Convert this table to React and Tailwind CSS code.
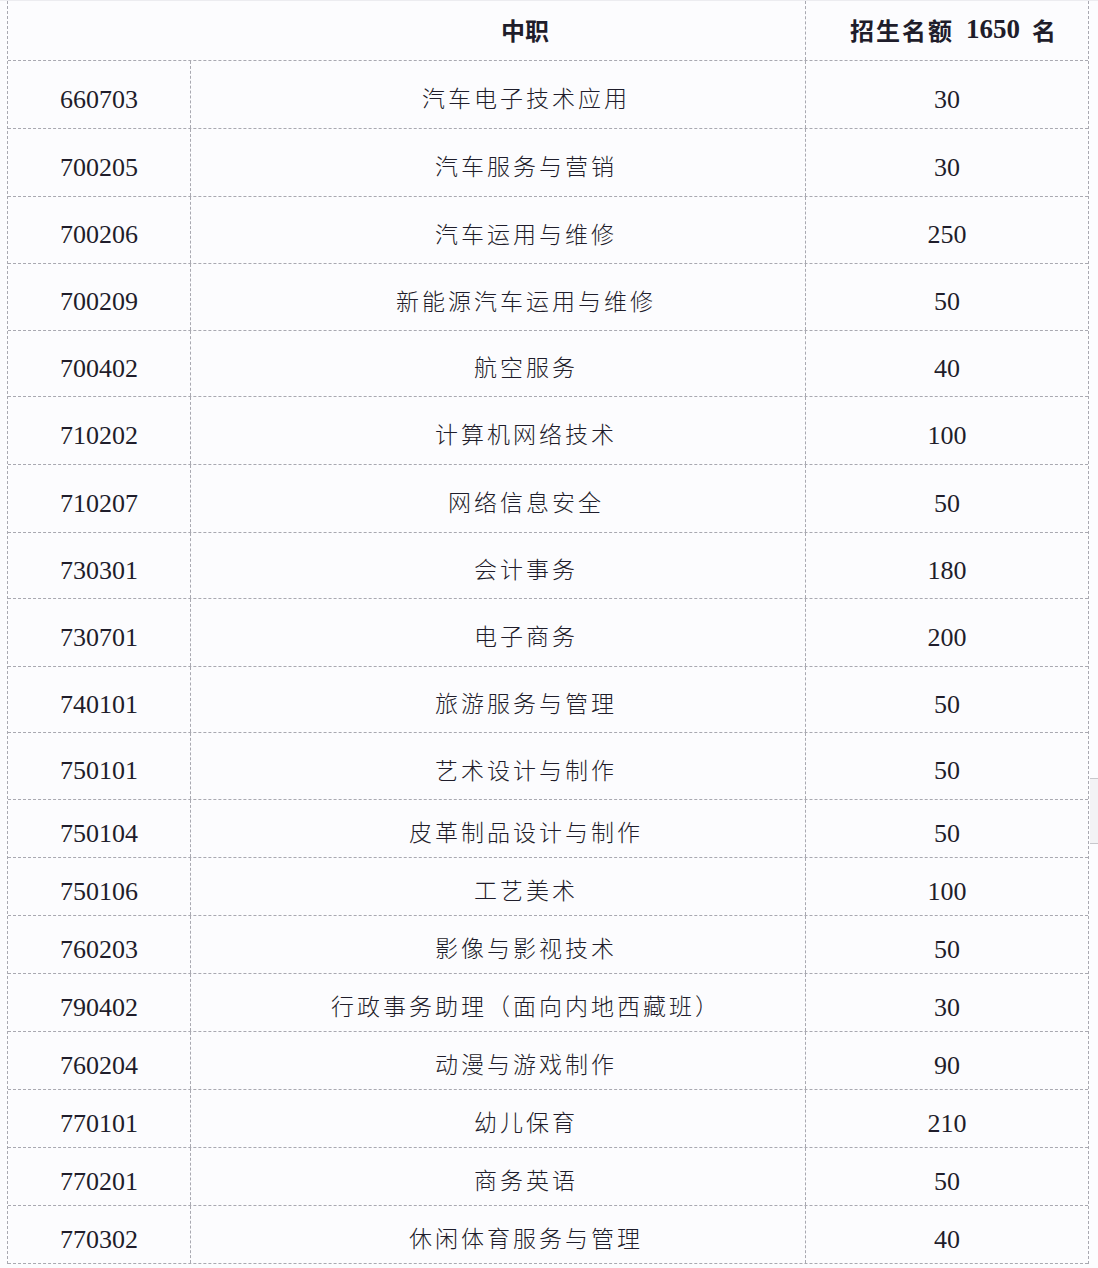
import React from "react";

const rows = [
  ["660703", "汽车电子技术应用", "30", "h-[68px]"],
  ["700205", "汽车服务与营销", "30", "h-[68px]"],
  ["700206", "汽车运用与维修", "250", "h-[67px]"],
  ["700209", "新能源汽车运用与维修", "50", "h-[67px]"],
  ["700402", "航空服务", "40", "h-[66px]"],
  ["710202", "计算机网络技术", "100", "h-[68px]"],
  ["710207", "网络信息安全", "50", "h-[68px]"],
  ["730301", "会计事务", "180", "h-[66px]"],
  ["730701", "电子商务", "200", "h-[68px]"],
  ["740101", "旅游服务与管理", "50", "h-[66px]"],
  ["750101", "艺术设计与制作", "50", "h-[67px]"],
  ["750104", "皮革制品设计与制作", "50", "h-[58px]"],
  ["750106", "工艺美术", "100", "h-[58px]"],
  ["760203", "影像与影视技术", "50", "h-[58px]"],
  ["790402", "行政事务助理（面向内地西藏班）", "30", "h-[58px]"],
  ["760204", "动漫与游戏制作", "90", "h-[58px]"],
  ["770101", "幼儿保育", "210", "h-[58px]"],
  ["770201", "商务英语", "50", "h-[58px]"],
  ["770302", "休闲体育服务与管理", "40", "h-[58px]"],
];

const serif = "font-['Liberation_Serif','Noto_Sans_CJK_SC',serif]";
const cjk = "font-['Noto_Sans_CJK_SC','Noto_Sans_CJK_JP',sans-serif]";

export default function App() {
  return (
    <div className="relative w-[1098px] h-[1268px] bg-[#fcfcfe] overflow-hidden text-[#1f1d2b]">
      <div className="h-px w-full bg-[#ececf0]" />
      <div className="ml-[7px] w-[1082px] border-l border-r border-dashed border-[#a9a9b1]">
        <div className="flex h-[60px] border-b border-dashed border-[#a9a9b1]">
          <div className="w-[798px] shrink-0 border-r border-dashed border-[#a9a9b1] flex items-center">
            <span className={`ml-[493px] pb-[2px] text-[24px] font-bold leading-none ${cjk}`}>
              中职
            </span>
          </div>
          <div className="flex-1 flex items-center justify-center pl-[12px] pb-[2px] text-[24px] font-bold leading-none">
            <span className={`tracking-[2px] ${cjk}`}>招生名额</span>
            <span className={`ml-[12px] text-[27px] ${serif}`}>1650</span>
            <span className={`ml-[12px] ${cjk}`}>名</span>
          </div>
        </div>
        {rows.map(([code, name, num, h]) => (
          <div key={code} className={`flex border-b border-dashed border-[#a9a9b1] ${h}`}>
            <div
              className={`w-[183px] shrink-0 border-r border-dashed border-[#a9a9b1] flex items-center justify-center pt-[10px] text-[26px] leading-none ${serif}`}
            >
              {code}
            </div>
            <div
              className={`w-[615px] shrink-0 border-r border-dashed border-[#a9a9b1] flex items-center justify-center pl-[56px] pt-[6px] text-[23px] tracking-[3px] font-light leading-none ${cjk}`}
            >
              {name}
            </div>
            <div
              className={`flex-1 flex items-center justify-center pt-[10px] text-[26px] leading-none ${serif}`}
            >
              {num}
            </div>
          </div>
        ))}
      </div>
      <div className="absolute left-[1090px] top-[778px] w-[10px] h-[66px] border-t border-b border-[#c8c8cc] bg-[#f3f3f5]" />
    </div>
  );
}
